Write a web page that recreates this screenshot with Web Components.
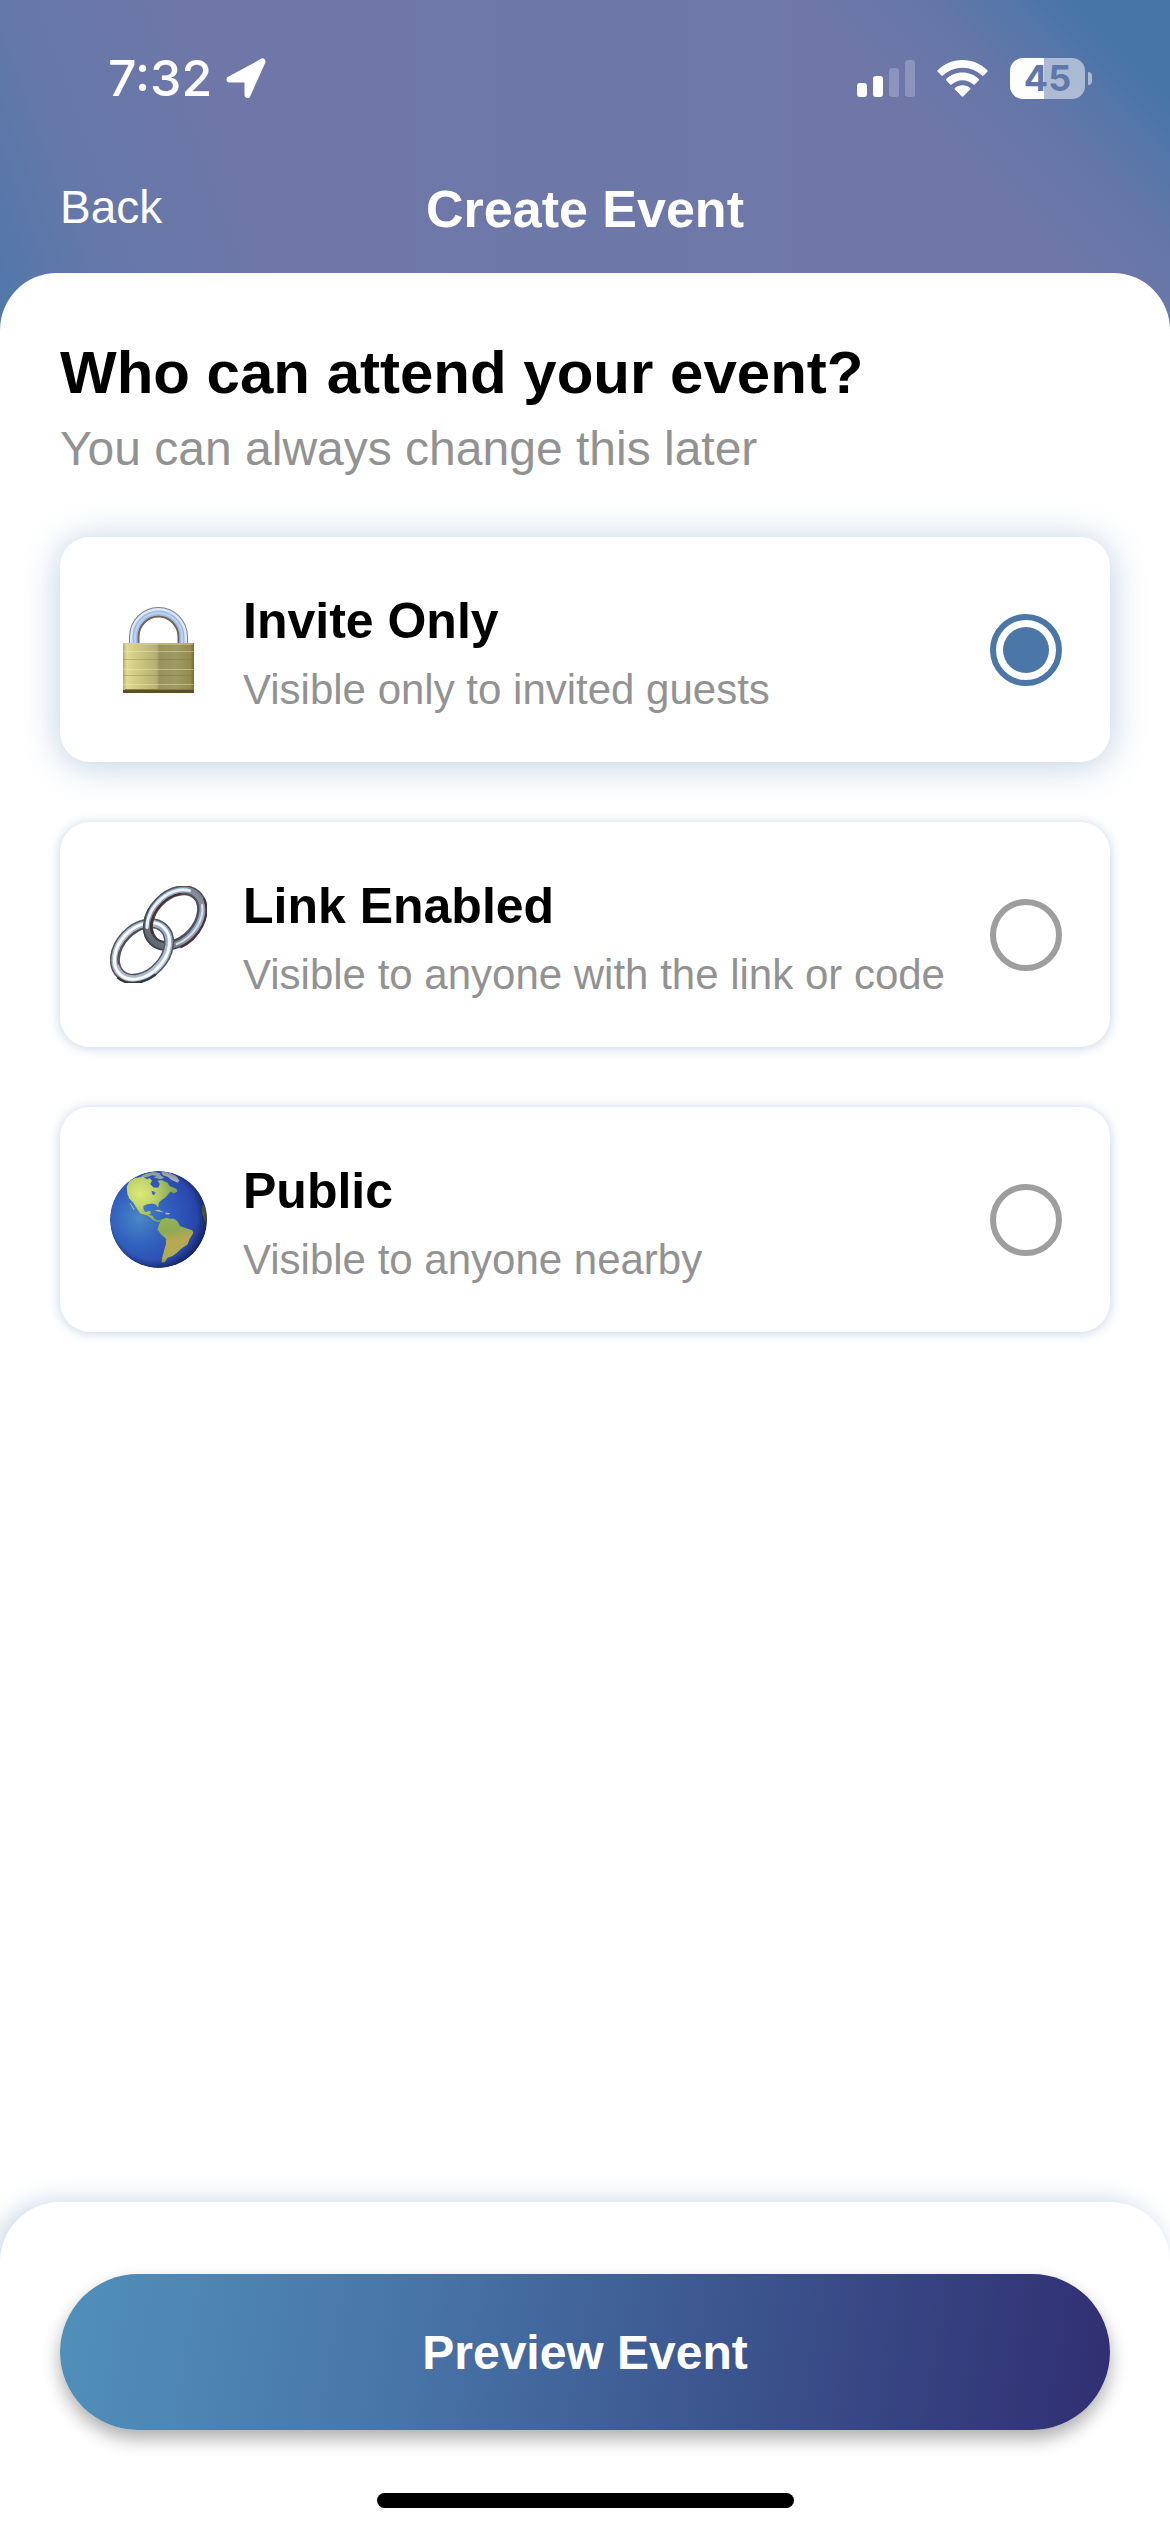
<!DOCTYPE html>
<html lang="en">
<head>
<meta charset="utf-8">
<meta name="viewport" content="width=device-width, initial-scale=1">
<title>Create Event</title>
<style>
  html, body { margin: 0; min-height: 100%; }
  body { font-family: "Liberation Sans", Arial, sans-serif; color: #000; background: #fff; }
</style>
</head>
<body>
<create-event-page></create-event-page>

<template id="create-event-page">
  <style>
    :host {
      display: flex; flex-direction: column; min-height: 100vh;
      background-color: #fff;
      background-image:
        linear-gradient(225deg, #4875a8 70px, rgba(72,117,168,.3) 165px, rgba(72,117,168,0) 260px),
        linear-gradient(70deg, #4f77aa 0, rgba(92,120,170,.6) 110px, rgba(100,120,170,0) 290px),
        linear-gradient(90deg, #6f77a8 30%, #6d78a9 45%, #6d78a9 55%, #6f77a8 75%);
      background-size: 100% 340px;
      background-repeat: no-repeat;
    }
    main {
      flex: 1; display: flex; flex-direction: column;
      padding: 64px 60px 60px; background: #fff;
      border-radius: 57px 57px 0 0;
    }
    h1 { margin: 0 0 12px; font-size: 60px; line-height: 72px; font-weight: 700; }
    p { margin: 0 0 60px; font-size: 48px; line-height: 56px; color: #929292; }
  </style>
  <status-bar></status-bar>
  <nav-bar>Create Event</nav-bar>
  <main>
    <h1 id="question">Who can attend your event?</h1>
    <p>You can always change this later</p>
    <audience-picker></audience-picker>
  </main>
  <action-bar>Preview Event</action-bar>
</template>

<template id="status-bar">
  <style>
    :host {
      display: flex; align-items: center; justify-content: space-between;
      height: 156px; padding: 0 78px 0 108px; color: #fff;
      font-family: Inter, "Liberation Sans", sans-serif;
    }
    .group { display: flex; align-items: center; }
    .left { gap: 14px; }
    .right { gap: 22px; }
    time { font-size: 50px; line-height: 60px; font-weight: 500; }
    svg { display: block; }
    .battery { display: flex; align-items: center; gap: 3px; }
    .level {
      width: 75px; height: 41px; border-radius: 13px;
      background: linear-gradient(90deg, #fff 45%, rgba(255,255,255,.5) 45%);
      color: #6077aa; font-size: 36px; line-height: 41px; font-weight: 700; text-align: center;
    }
    .nub { width: 4px; height: 13px; border-radius: 0 6px 6px 0; background: rgba(255,255,255,.5); }
  </style>
  <div class="group left">
    <time>7:32</time>
    <svg width="40" height="40" viewBox="0 0 40 40" aria-hidden="true">
      <path d="M36.500 3.500 L21.500 37 V21.500 H3.500 Z" fill="#fff" stroke="#fff" stroke-width="6" stroke-linejoin="round"/>
    </svg>
  </div>
  <div class="group right">
    <svg width="58" height="38" viewBox="0 0 58 38" fill="#fff" aria-hidden="true">
      <rect x="0" y="24" width="10" height="14" rx="3"/>
      <rect x="16" y="17" width="10" height="21" rx="3"/>
      <rect x="32" y="9" width="10" height="29" rx="3" opacity=".22"/>
      <rect x="48" y="1" width="10" height="37" rx="3" opacity=".22"/>
    </svg>
    <svg width="51" height="38" viewBox="0 0 51 38" fill="#fff" aria-hidden="true">
      <path d="M25.500 1C35.500 1 44 5 50.300 11.200Q51 12 50.300 12.800L46.500 16.600Q45.800 17.200 45.100 16.600C39.800 11.600 33 8.700 25.500 8.700S11.200 11.600 5.900 16.600Q5.200 17.200 4.500 16.600L.7 12.800Q0 12 .7 11.200C7 5 15.500 1 25.500 1Z"/>
      <path d="M25.500 13.600C31.900 13.600 37.500 16 41.700 20Q42.400 20.800 41.700 21.500L37.700 25.500Q37 26.100 36.300 25.500C33.400 22.900 29.700 21.300 25.500 21.300S17.600 22.900 14.700 25.500Q14 26.100 13.300 25.500L9.300 21.500Q8.600 20.800 9.300 20C13.500 16 19.100 13.600 25.500 13.600Z"/>
      <path d="M25.500 26.200C28.400 26.200 31 27.200 33.100 28.900Q33.900 29.700 33.100 30.500L26.300 37.300Q25.500 38 24.700 37.300L17.900 30.500Q17.100 29.700 17.900 28.900C20 27.200 22.600 26.200 25.500 26.200Z"/>
    </svg>
    <div class="battery"><div class="level">45</div><div class="nub"></div></div>
  </div>
</template>

<template id="nav-bar">
  <style>
    :host {
      display: grid; grid-template-columns: 1fr auto 1fr; align-items: center;
      height: 105px; margin-bottom: 12px; padding: 0 60px; color: #fff;
    }
    button {
      justify-self: start; margin: 0; padding: 0 0 4px; border: 0; background: none;
      font: inherit; font-size: 46px; line-height: 56px; color: inherit; cursor: pointer;
    }
    .title { font-size: 52px; line-height: 60px; font-weight: 700; }
  </style>
  <button type="button">Back</button>
  <div class="title"><slot></slot></div>
</template>

<template id="option-card">
  <style>
    :host {
      display: flex; align-items: center; gap: 36px;
      box-sizing: border-box; min-height: 225px; padding: 0 48px 0 50px;
      border-radius: 30px; background: #fff;
      box-shadow: 0 1px 12px rgba(72,117,168,.32);
    }
    :host([selected]) { box-shadow: 0 3px 36px rgba(72,117,168,.36); }
    .text { flex: 1; display: flex; flex-direction: column; gap: 12px; }
    .title { font-size: 50px; line-height: 68px; font-weight: 700; }
    .detail { font-size: 42px; line-height: 46px; color: #929292; }
  </style>
  <slot name="icon"></slot>
  <div class="text">
    <div class="title"><slot name="title"></slot></div>
    <div class="detail"><slot></slot></div>
  </div>
  <slot name="control"></slot>
</template>

<template id="audience-picker">
  <style>
    :host { display: block; }
    form { display: flex; flex-direction: column; gap: 60px; }
    label { display: block; cursor: pointer; }
    input {
      appearance: none; box-sizing: border-box; flex: none;
      width: 72px; height: 72px; margin: 0; padding: 7px;
      border: 6px solid #9e9e9e; border-radius: 50%; background: #fff;
    }
    input:checked { border-color: #4a76a8; background: #4a76a8 content-box; }
  </style>
  <form role="radiogroup" aria-label="Who can attend your event?">
    <label>
      <option-card selected>
        <lock-icon slot="icon"></lock-icon>
        <span slot="title">Invite Only</span>
        Visible only to invited guests
        <input slot="control" type="radio" name="audience" value="invite" checked>
      </option-card>
    </label>
    <label>
      <option-card>
        <link-icon slot="icon"></link-icon>
        <span slot="title">Link Enabled</span>
        Visible to anyone with the link or code
        <input slot="control" type="radio" name="audience" value="link">
      </option-card>
    </label>
    <label>
      <option-card>
        <globe-icon slot="icon"></globe-icon>
        <span slot="title">Public</span>
        Visible to anyone nearby
        <input slot="control" type="radio" name="audience" value="public">
      </option-card>
    </label>
  </form>
</template>

<template id="lock-icon">
  <style>:host { display: block; flex: none; } svg { display: block; }</style>
  <svg width="97" height="97" viewBox="0 0 97 97" fill="none" aria-hidden="true">
    <defs>
      <linearGradient id="brass" x1="0" x2="1">
        <stop offset="0" stop-color="#b3aa62"/><stop offset=".05" stop-color="#dfda95"/>
        <stop offset=".2" stop-color="#d0ca83"/><stop offset=".47" stop-color="#b5af72"/>
        <stop offset=".51" stop-color="#98925e"/><stop offset=".75" stop-color="#9f9962"/>
        <stop offset=".95" stop-color="#938b50"/><stop offset="1" stop-color="#75693a"/>
      </linearGradient>
    </defs>
    <g transform="translate(0 2)">
      <path d="M24 44V34A24.500 25 0 0 1 73 34V44" stroke="#7c818b" stroke-width="10"/>
      <path d="M24 44V34A24.500 25 0 0 1 73 34V44" stroke="#dfe7f4" stroke-width="8"/>
      <path d="M25 44V34A23.500 24 0 0 1 72 34V44" stroke="#9db9e4" stroke-width="5"/>
      <path d="M25 44V34A23.500 24 0 0 1 72 34V44" stroke="#bdd2f3" stroke-width="2"/>
      <path d="M28.500 43V34A20 20.500 0 0 1 68.500 34V43" stroke="#70674f" stroke-width="2"/>
    </g>
    <rect x="13" y="42" width="71" height="50" rx="1" fill="url(#brass)"/>
    <path d="M14 43H83" stroke="#d9d48c"/>
    <path d="M13 58.500H84M13 74.500H84" stroke="#7c7536" stroke-opacity=".35"/>
    <path d="M13 50.500H84M13 68.500H84M13 83.500H84" stroke="#f0eab0" stroke-opacity=".45"/>
    <path d="M13 89H84V91Q84 92 83 92H14Q13 92 13 91Z" fill="#5b5024"/>
    <path d="M15 88.500H82" stroke="#857b3e"/>
  </svg>
</template>

<template id="link-icon">
  <style>:host { display: block; flex: none; } svg { display: block; }</style>
  <svg width="97" height="97" viewBox="0 0 97 97" fill="none" aria-hidden="true">
    <defs>
      <linearGradient id="steelFar" gradientUnits="userSpaceOnUse" x1="-30" y1="0" x2="36" y2="0">
        <stop offset="0" stop-color="#3d4249"/><stop offset=".5" stop-color="#4d525c"/><stop offset="1" stop-color="#5a4c50"/>
      </linearGradient>
      <linearGradient id="sheenFar" gradientUnits="userSpaceOnUse" x1="-34" y1="0" x2="36" y2="0">
        <stop offset="0" stop-color="#5f656e"/><stop offset=".35" stop-color="#8d97a6"/>
        <stop offset=".75" stop-color="#93acd0"/><stop offset="1" stop-color="#7c8088"/>
      </linearGradient>
      <linearGradient id="sheenNear" gradientUnits="userSpaceOnUse" x1="-36" y1="0" x2="36" y2="0">
        <stop offset="0" stop-color="#a9b2c0"/><stop offset=".5" stop-color="#b3c4dd"/><stop offset="1" stop-color="#8fa9d0"/>
      </linearGradient>
      <g id="far">
        <ellipse rx="31.500" ry="22.500" stroke="url(#steelFar)" stroke-width="10"/>
        <ellipse rx="32" ry="23" stroke="url(#sheenFar)" stroke-width="6"/>
        <path d="M-26 -14A32 23 0 0 1 30 -8" stroke="#e8f1fd" stroke-width="3" stroke-linecap="round"/>
        <path d="M-18 19A32 23 0 0 0 28 11" stroke="#dfe3ea" stroke-width="2" stroke-linecap="round"/>
        <path d="M-27 -6A28 19 0 0 1 22 -12" stroke="#4d2c32" stroke-width="2"/>
        <path d="M34 8A36 27 0 0 1 -18 24" stroke="#4b2f33" stroke-width="2"/>
      </g>
      <g id="near">
        <ellipse rx="31.500" ry="22.500" stroke="#51555d" stroke-width="10"/>
        <ellipse rx="31.500" ry="22.500" stroke="url(#sheenNear)" stroke-width="7"/>
        <ellipse rx="32" ry="23" stroke="#f7faff" stroke-width="3"/>
        <path d="M-8 26A36 27 0 0 1 -36 0" stroke="#35383e" stroke-width="2.500"/>
        <path d="M-26 -8A28 19 0 0 1 20 -13" stroke="#554a4c" stroke-width="1.500"/>
      </g>
      <clipPath id="front"><path d="M26 22H46V50L50 70H36L30 52Z"/></clipPath>
    </defs>
    <use href="#far" transform="translate(65 32) rotate(-47)"/>
    <use href="#near" transform="translate(32 65) rotate(-47)"/>
    <g clip-path="url(#front)"><use href="#far" transform="translate(65 32) rotate(-47)"/></g>
  </svg>
</template>

<template id="globe-icon">
  <style>:host { display: block; flex: none; } svg { display: block; }</style>
  <svg width="97" height="97" viewBox="60 63 290 290" aria-hidden="true">
    <defs>
      <radialGradient id="sea" cx=".3" cy=".48" r=".75">
        <stop offset="0" stop-color="#4a88c6"/><stop offset=".35" stop-color="#3363bf"/>
        <stop offset=".7" stop-color="#2b4cb2"/><stop offset="1" stop-color="#22368c"/>
      </radialGradient>
      <radialGradient id="north" gradientUnits="userSpaceOnUse" cx="150" cy="130" r="100">
        <stop offset="0" stop-color="#dde878"/><stop offset=".4" stop-color="#c3d56c"/><stop offset="1" stop-color="#84a552"/>
      </radialGradient>
      <linearGradient id="south" x1="0" y1="0" x2=".2" y2="1">
        <stop offset="0" stop-color="#93b552"/><stop offset=".35" stop-color="#8faa55"/>
        <stop offset=".6" stop-color="#b9a852"/><stop offset="1" stop-color="#a9b04c"/>
      </linearGradient>
      <radialGradient id="shade" cx=".46" cy=".47" r=".55">
        <stop offset=".8" stop-color="#101a50" stop-opacity="0"/><stop offset="1" stop-color="#0a0f38" stop-opacity=".6"/>
      </radialGradient>
      <clipPath id="disc"><circle cx="205" cy="208" r="145"/></clipPath>
    </defs>
    <g clip-path="url(#disc)">
      <circle cx="205" cy="208" r="145" fill="url(#sea)"/>
      <path d="M110 110L118 94L135 84L160 80L170 88L178 84L186 92L180 102L190 112L204 113L209 102L202 92L214 90L232 98L238 108L258 116L262 124L250 130L242 124L236 130L226 142L214 150L206 158L204 173L198 164L186 160L170 163L160 168L160 178L166 186L180 182L182 190L176 194L188 198L192 206L202 211L214 209L206 216L190 210L172 196L150 190L140 174L128 156L118 146L112 132Z" fill="url(#north)"/>
      <path d="M118 158L122 160L134 178L130 178Z" fill="#c6c878"/>
      <path d="M184 122L196 126L192 136L186 132Z" fill="#3c6cb4"/>
      <path d="M192 182L206 179L222 187L208 185Z M226 187L240 189L236 193L226 192Z" fill="#b9c877"/>
      <path d="M150 80L165 72L190 66L212 70L204 78L186 76L170 82Z M190 82L210 74L222 84L210 88Z" fill="#93a396"/>
      <path d="M212 64L238 68L258 78L268 92L262 98L244 90L232 80L218 76Z" fill="#a3a9b2"/>
      <path d="M213 209L228 203L240 206L252 206L262 214L270 228L288 234L306 240L309 248L298 266L292 282L272 296L262 306L246 318L232 322L224 336L214 336L216 322L222 300L227 282L228 266L212 252L202 238L206 224Z" fill="url(#south)"/>
      <path d="M336 166L348 162L360 220L344 216L336 190Z" fill="#777e34"/>
      <circle cx="205" cy="208" r="145" fill="url(#shade)"/>
    </g>
  </svg>
</template>

<template id="action-bar">
  <style>
    :host {
      display: flex; flex-direction: column; align-items: center;
      padding: 72px 60px 24px; background: #fff;
      border-radius: 60px 60px 0 0;
      box-shadow: -6px 0 24px rgba(72,117,168,.3);
    }
    button {
      width: 100%; height: 156px; margin: 0 0 63px; padding: 2px 0 0; border: 0; border-radius: 78px;
      background: linear-gradient(100deg, #5190bb, #4875a8 33%, #3c5690 62%, #302e72);
      box-shadow: 0 9px 18px rgba(0,0,0,.32);
      font: inherit; font-size: 48px; line-height: 60px; font-weight: 700; color: #fff; cursor: pointer;
    }
    .home { width: 417px; height: 15px; border-radius: 8px; background: #000; }
  </style>
  <button type="button"><slot></slot></button>
  <div class="home"></div>
</template>

<script>
  class TemplateElement extends HTMLElement {
    constructor() {
      super();
      const template = document.getElementById(this.localName);
      this.attachShadow({ mode: "open" }).append(template.content.cloneNode(true));
    }
  }

  class AudiencePicker extends TemplateElement {
    connectedCallback() {
      this.shadowRoot.addEventListener("change", () => {
        for (const card of this.shadowRoot.querySelectorAll("option-card")) {
          card.toggleAttribute("selected", card.querySelector("input").checked);
        }
      });
    }
  }

  customElements.define("lock-icon", class extends TemplateElement {});
  customElements.define("link-icon", class extends TemplateElement {});
  customElements.define("globe-icon", class extends TemplateElement {});
  customElements.define("option-card", class extends TemplateElement {});
  customElements.define("audience-picker", AudiencePicker);
  customElements.define("status-bar", class extends TemplateElement {});
  customElements.define("nav-bar", class extends TemplateElement {});
  customElements.define("action-bar", class extends TemplateElement {});
  customElements.define("create-event-page", class extends TemplateElement {});
</script>
</body>
</html>
